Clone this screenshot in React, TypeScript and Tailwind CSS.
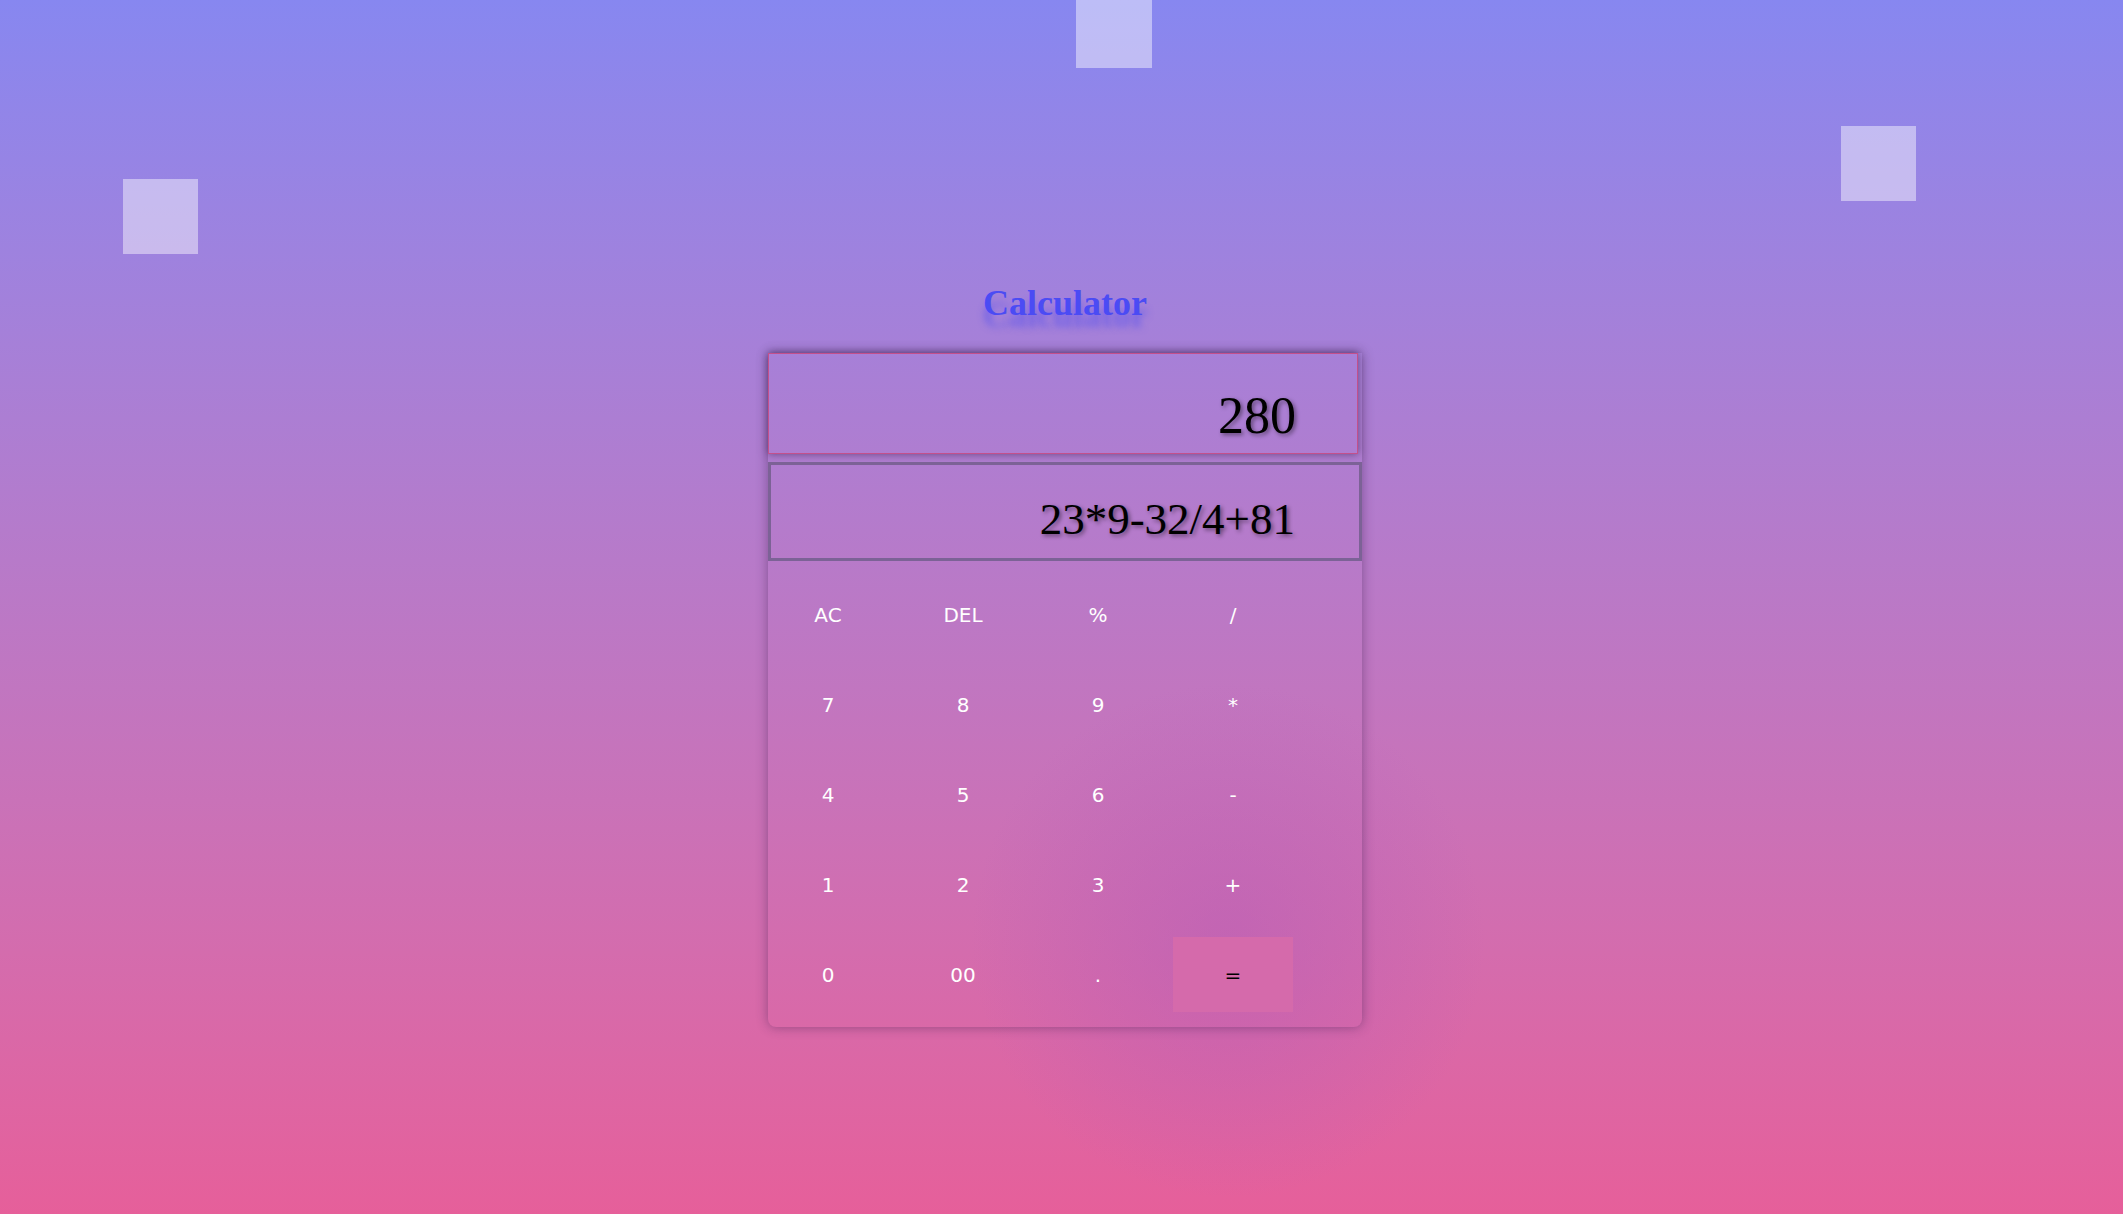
const keys = [
  ["AC", "DEL", "%", "/"],
  ["7", "8", "9", "*"],
  ["4", "5", "6", "-"],
  ["1", "2", "3", "+"],
  ["0", "00", ".", "="],
];

export default function App() {
  return (
    <div className="relative min-h-screen w-full overflow-hidden bg-gradient-to-b from-[#8787f0] to-[#e65f9a]">
      {/* floating squares */}
      <div className="absolute left-[1076px] top-[-7px] h-[75px] w-[76px] bg-white/45" />
      <div className="absolute left-[123px] top-[179px] h-[75px] w-[75px] bg-white/45" />
      <div className="absolute left-[1841px] top-[126px] h-[75px] w-[75px] bg-white/45" />

      {/* hover glow */}
      <div className="pointer-events-none absolute left-[968px] top-[680px] h-[520px] w-[520px] rounded-full bg-[radial-gradient(circle,rgba(175,90,185,0.45)_0%,rgba(175,90,185,0.2)_40%,rgba(175,90,185,0)_70%)]" />

      <div className="relative flex flex-col items-center pl-[7px] pt-[283px]">
        <h1 className="font-['Liberation_Serif',serif] text-[36px] font-bold leading-[1.15] text-[#4b4bf4] [text-shadow:0_12px_7px_rgba(75,75,240,0.55)]">
          Calculator
        </h1>

        <div className="mt-[29px] w-[594px] rounded-b-[8px] shadow-[0_0_12px_rgba(60,30,80,0.45)]">
          <div className="h-[101px] w-[590px] border border-[#c4508c] pr-[61px] pt-[32px] text-right font-['Liberation_Serif',serif] text-[52px] leading-[1.15] text-black shadow-[0_0_8px_rgba(40,20,60,0.55)] [text-shadow:2px_2px_4px_rgba(0,0,0,0.45)]">
            280
          </div>
          <div className="mt-[8px] h-[99px] w-[594px] border-[3px] border-[#7c6296] pr-[64px] pt-[29px] text-right font-['Liberation_Serif',serif] text-[45px] leading-[1.15] text-black [text-shadow:2px_2px_4px_rgba(0,0,0,0.45)]">
            23*9-32/4+81
          </div>
          <div className="grid grid-cols-[repeat(4,120px)] gap-[15px] pb-[15px] pt-[16px]">
            {keys.flat().map((k) => (
              <button
                key={k}
                className={`flex h-[75px] items-center justify-center font-['Comic_Sans_MS','DejaVu_Sans',sans-serif] text-[20px] ${
                  k === "=" ? "bg-[#d56aab] text-black" : "text-white"
                }`}
              >
                {k}
              </button>
            ))}
          </div>
        </div>
      </div>
    </div>
  );
}
